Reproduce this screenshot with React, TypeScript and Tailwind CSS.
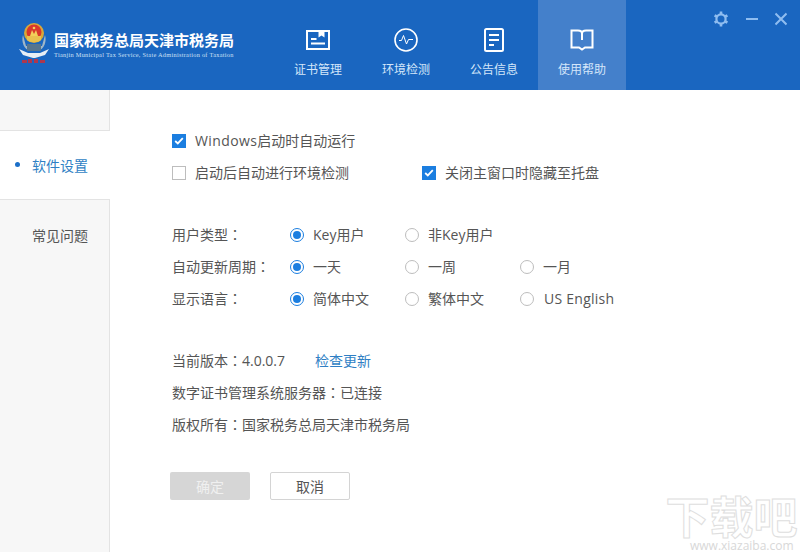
import React from "react";

const font = { fontFamily: '"Open Sans","Noto Sans CJK SC",sans-serif' };

function Colon() {
  return <span className="font-['Noto_Sans_CJK_TC']">：</span>;
}

function Emblem() {
  return (
    <svg width="32" height="42" viewBox="0 0 32 42" className="shrink-0">
      <path d="M5 13 C3 20 6 27 12 29 L20 29 C26 27 29 20 27 13 L24 24 L8 24 Z" fill="#9fb6c8" />
      <path d="M1 27 L10 31 L22 31 L31 27 L27 33 L17 36 L15 36 L5 33 Z" fill="#e8eef4" />
      <circle cx="16" cy="11" r="10" fill="#d9a838" />
      <circle cx="16" cy="10" r="7.5" fill="#d8372c" />
      <path d="M9 14 H23 V18 C21 21 11 21 9 18 Z" fill="#e9c14f" />
      <path d="M12 14 L14 8 L16 12 L18 8 L20 14 Z" fill="#f2cf5a" />
      <circle cx="16" cy="6" r="1.3" fill="#f2cf5a" />
      <rect x="9" y="22" width="14" height="7" fill="#56758f" />
      <path d="M4 38 h5 v3 h-5 z M10 37 h4 v4 h-4 z M16 37 h4 v4 h-4 z M22 38 h5 v3 h-5 z" fill="#c8303a" opacity="0.85" />
    </svg>
  );
}

function CertIcon() {
  return (
    <svg width="24" height="20" viewBox="0 0 24 20" fill="none" stroke="#fff" strokeWidth="2">
      <path d="M1 1 H23 V19 H1 Z" />
      <path d="M5 9 H10.5 M5 13.5 H19" />
      <path d="M12.5 0 H18.5 V7.5 L15.5 5.5 L12.5 7.5 Z" fill="#fff" stroke="none" />
    </svg>
  );
}

function PulseIcon() {
  return (
    <svg width="24" height="24" viewBox="0 0 24 24" fill="none" stroke="#fff">
      <circle cx="12" cy="12" r="11" strokeWidth="1.6" />
      <path d="M5 12.5 H7.5 L9.5 7.5 L12.5 16 L14.5 11.5 L19 11.5" strokeWidth="1" />
    </svg>
  );
}

function DocIcon() {
  return (
    <svg width="20" height="24" viewBox="0 0 20 24" fill="none" stroke="#fff" strokeWidth="2">
      <rect x="1" y="1" width="18" height="22" rx="1.5" />
      <path d="M5 7 H15 M5 12 H15 M5 17 H10" />
    </svg>
  );
}

function BookIcon() {
  return (
    <svg width="24" height="22" viewBox="0 0 24 22" fill="none" stroke="#fff" strokeWidth="2">
      <path d="M8 1.5 H1.5 V18.5 H9 L12 20.5 L15 18.5 H22.5 V1.5 H16" />
      <path d="M8 1.5 C10.5 1.5 12 3 12 4.5 V11 M16 1.5 C13.5 1.5 12 3 12 4.5" />
    </svg>
  );
}

function GearIcon() {
  return (
    <svg width="16" height="16" viewBox="0 0 16 16" fill="none" stroke="#8fbdf0">
      <circle cx="8" cy="8" r="4.6" strokeWidth="2.2" />
      <path
        d="M8 .6 V3 M8 13 V15.4 M1.6 4.3 L3.7 5.5 M12.3 10.5 L14.4 11.7 M1.6 11.7 L3.7 10.5 M12.3 5.5 L14.4 4.3"
        strokeWidth="2.6"
      />
    </svg>
  );
}

function NavItem({ icon, label, active }: { icon: React.ReactNode; label: string; active?: boolean }) {
  return (
    <div className={`w-[88px] h-full flex flex-col items-center ${active ? "bg-[#4480cb]" : ""}`}>
      <div className="mt-[27px] h-[25px] flex items-center justify-center w-full">{icon}</div>
      <div className="mt-[11px] text-[12px] leading-[14px] text-[#d4e6fa]">{label}</div>
    </div>
  );
}

function Check({ on }: { on?: boolean }) {
  return on ? (
    <span className="w-[14px] h-[14px] bg-[#1b7ee0] flex items-center justify-center shrink-0">
      <svg width="10" height="8" viewBox="0 0 10 8" fill="none" stroke="#fff" strokeWidth="1.8">
        <path d="M1.2 4 L3.8 6.4 L8.8 1.2" />
      </svg>
    </span>
  ) : (
    <span className="w-[14px] h-[14px] bg-white border border-[#bdbdbd] shrink-0" />
  );
}

function Radio({ on, label, wide }: { on?: boolean; label: string; wide?: boolean }) {
  return (
    <div className="flex items-center w-[115px]">
      {on ? (
        <span className="w-[14px] h-[14px] rounded-full border border-[#1b7ee0] bg-white flex items-center justify-center shrink-0">
          <span className="w-[8px] h-[8px] rounded-full bg-[#1b7ee0]" />
        </span>
      ) : (
        <span className="w-[14px] h-[14px] rounded-full border border-[#bdbdbd] bg-white shrink-0" />
      )}
      <span className={`ml-[9px] -mt-[2px] ${wide ? "ml-[10px] tracking-[0.25px]" : ""}`}>{label}</span>
    </div>
  );
}

function RadioRow({ label, items }: { label: string; items: { on?: boolean; label: string; wide?: boolean }[] }) {
  return (
    <div className="flex items-center h-[20px]">
      <div className="w-[118px] -mt-[2px]">
        {label}
        <Colon />
      </div>
      {items.map((it) => (
        <Radio key={it.label} {...it} />
      ))}
    </div>
  );
}

export default function App() {
  return (
    <div className="relative w-[800px] h-[552px] bg-white overflow-hidden flex flex-col text-[14px] text-[#555]" style={font}>
      <header className="h-[90px] bg-[#1a66c0] flex shrink-0">
        <div className="w-[274px] pl-[18px] pt-[22px] flex">
          <Emblem />
          <div className="ml-[4px] pt-[8px]">
            <div className="text-[15px] leading-[20px] font-bold text-white whitespace-nowrap">国家税务总局天津市税务局</div>
            <div
              className="text-[6.3px] leading-[9px] text-[#cfe0f5] whitespace-nowrap"
              style={{ fontFamily: '"Liberation Serif",serif', letterSpacing: "0.28px" }}
            >
              Tianjin Municipal Tax Service, State Administration of Taxation
            </div>
          </div>
        </div>
        <nav className="flex h-full">
          <NavItem icon={<CertIcon />} label="证书管理" />
          <NavItem icon={<PulseIcon />} label="环境检测" />
          <NavItem icon={<DocIcon />} label="公告信息" />
          <NavItem icon={<BookIcon />} label="使用帮助" active />
        </nav>
        <div className="flex-1 flex justify-end items-start pt-[11px] pr-[13px] gap-[17px]">
          <GearIcon />
          <svg width="12" height="16" viewBox="0 0 12 16" stroke="#8fbdf0" strokeWidth="2">
            <path d="M0 8 H12" />
          </svg>
          <svg width="12" height="16" viewBox="0 0 12 16" stroke="#8fbdf0" strokeWidth="2" fill="none">
            <path d="M.5 2.5 L11.5 13.5 M11.5 2.5 L.5 13.5" />
          </svg>
        </div>
      </header>

      <div className="flex-1 flex min-h-0">
        <aside className="w-[110px] shrink-0 bg-[#f7f7f7] border-r border-[#e3e3e3] pt-[40px]">
          <div className="relative z-10 w-[110px] h-[70px] bg-white border-y border-[#e3e3e3] flex items-center pl-[32px] text-[#2f7fc4]">
            <span className="absolute left-[15px] top-[31px] w-[5px] h-[5px] rounded-full bg-[#1b6fc8]" />
            软件设置
          </div>
          <div className="pl-[32px] pt-[26px] leading-[20px]">常见问题</div>
        </aside>

        <main className="flex-1 pl-[62px] pt-[41px]">
          <div className="flex items-center h-[20px] gap-[9px]">
            <Check on />
            <span className="-mt-[2px]">
              <span className="tracking-[0.4px]">Windows</span>启动时自动运行
            </span>
          </div>
          <div className="flex items-center h-[20px] mt-[12px]">
            <div className="w-[250px] flex items-center gap-[9px]">
              <Check />
              <span className="-mt-[2px]">启动后自动进行环境检测</span>
            </div>
            <div className="flex items-center gap-[9px]">
              <Check on />
              <span className="-mt-[2px]">关闭主窗口时隐藏至托盘</span>
            </div>
          </div>

          <div className="mt-[42px] flex flex-col gap-[12px]">
            <RadioRow
              label="用户类型"
              items={[{ on: true, label: "Key用户" }, { label: "非Key用户" }]}
            />
            <RadioRow
              label="自动更新周期"
              items={[{ on: true, label: "一天" }, { label: "一周" }, { label: "一月" }]}
            />
            <RadioRow
              label="显示语言"
              items={[{ on: true, label: "简体中文" }, { label: "繁体中文" }, { label: "US English", wide: true }]}
            />
          </div>

          <div className="mt-[42px] flex flex-col gap-[12px]">
            <div className="h-[20px] flex items-center">
              <span className="w-[143px] -mt-[2px]">
                当前版本
                <Colon />
                4.0.0.7
              </span>
              <span className="text-[#2f7fc4] -mt-[2px]">检查更新</span>
            </div>
            <div className="h-[20px] flex items-center">
              <span className="-mt-[2px]">
                数字证书管理系统服务器
                <Colon />
                已连接
              </span>
            </div>
            <div className="h-[20px] flex items-center">
              <span className="-mt-[2px]">
                版权所有
                <Colon />
                国家税务总局天津市税务局
              </span>
            </div>
          </div>

          <div className="mt-[37px] -ml-[2px] flex gap-[20px]">
            <button className="w-[80px] h-[28px] rounded-[2px] bg-[#d6d6d6] text-[#f0f0f0]">确定</button>
            <button className="w-[80px] h-[28px] rounded-[2px] bg-white border border-[#d4d4d4] text-[#555]">取消</button>
          </div>
        </main>
      </div>

      <div className="absolute left-[665px] top-[494px] w-[133px] h-[46px] text-center pointer-events-none">
        <div
          className="text-[44px] leading-[46px] font-bold whitespace-nowrap"
          style={{ WebkitTextStroke: "1px #dedede", color: "#fff" }}
        >
          下载吧
        </div>
      </div>
      <div className="absolute left-[690px] top-[540px] text-[12px] leading-[12px] text-[#d8d8d8] pointer-events-none">www.xiazaiba.com</div>
    </div>
  );
}
